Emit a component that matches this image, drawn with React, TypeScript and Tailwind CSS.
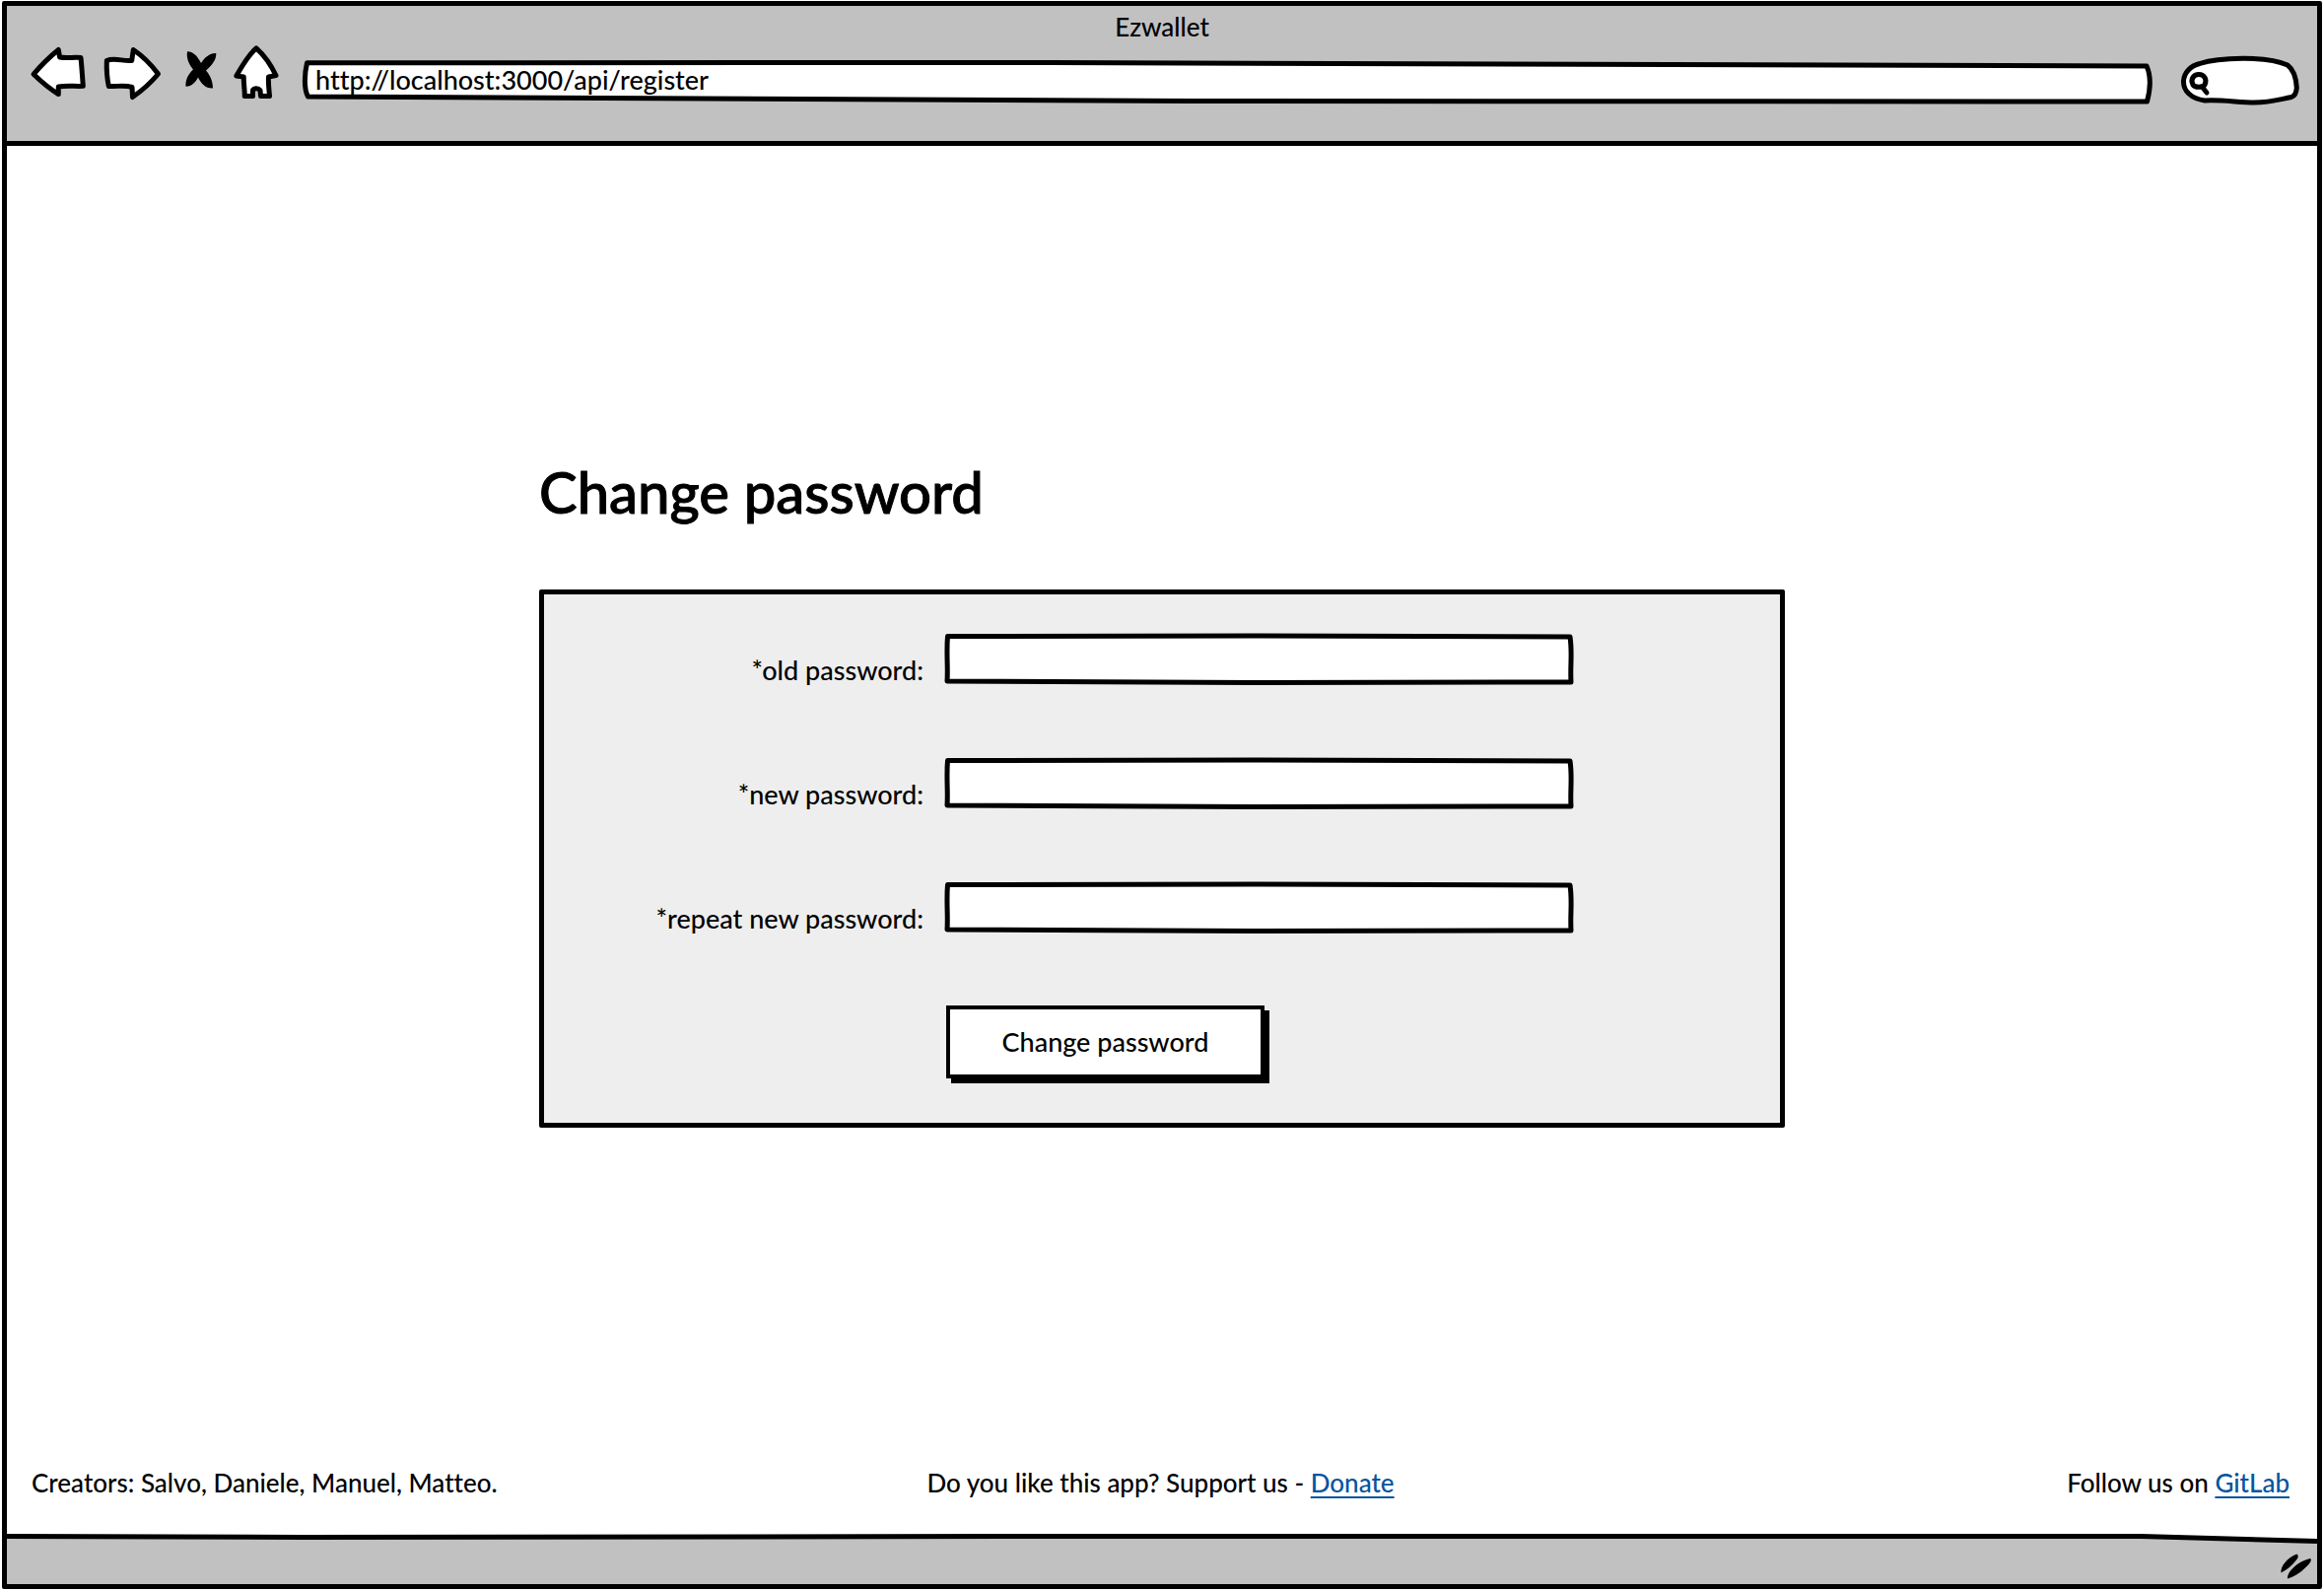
import { useState } from "react";

const stroke = {
  fill: "white",
  stroke: "black",
  strokeWidth: 5,
  strokeLinecap: "round" as const,
  strokeLinejoin: "round" as const,
};

function BackIcon() {
  return (
    <svg className="block h-16 w-[60px]" viewBox="0 0 60 64" aria-hidden="true">
      <path {...stroke} d="M4 31.3C12 22 20 14 29.3 6.5L30.6 14C38 15.5 45 13.5 52 14.5C53 24 53.5 33 54.3 43.3C46 43.8 38 42.5 29.3 44L29.3 51.5C20 46 12 39 4 31.3Z" />
    </svg>
  );
}

function ForwardIcon() {
  return (
    <svg className="block h-16 w-16" viewBox="0 0 64 64" aria-hidden="true">
      <path {...stroke} d="M6.3 17.5C14 14 23 18.5 31.7 17.5L33.3 6.5C43 13 51 21 58.5 31C51 40 42 48 32.5 54.5L32 44.3C24 42 16 44 8.3 43.5C6.5 35 6 26 6.3 17.5Z" />
    </svg>
  );
}

function StopIcon() {
  return (
    <svg className="block h-16 w-11" viewBox="0 0 44 64" aria-hidden="true">
      <path d="M12 8.3C17 8 22 12 26 20C30 14 35 9.5 41.3 10C41.5 17 37 22 31 27.5C35 32 38 38 38 45.5C31 46 26 41 23 34.5C20 40 16 44 10.5 43.7C10 37 13 31 18 26.5C13 21 11 14 12 8.3Z" />
    </svg>
  );
}

function HomeIcon() {
  return (
    <svg className="block h-16 w-[52px]" viewBox="0 0 52 64" aria-hidden="true">
      <path {...stroke} d="M26 4.8C33 11 41 22 46 32.5L38.5 34C38 41 39 47 39.5 53.5L30.5 53.5L30 47.5C28 45 24 45 22.5 47.5L22.5 53.5L14.2 53.5C14.5 47 13 41 13.3 34L5.8 33C12 22 19 11 26 4.8Z" />
    </svg>
  );
}

function AddressOutline() {
  return (
    <svg className="absolute inset-0 h-full w-full" viewBox="0 0 1879 48" preserveAspectRatio="none" aria-hidden="true">
      <path {...stroke} d="M5.5 3.8L760 3.5L1872 7C1877 18 1876 30 1872.5 43L900 42.5L6.5 38C2 30 3 14 5.5 3.8Z" />
    </svg>
  );
}

function SearchOutline() {
  return (
    <svg className="absolute inset-0 h-full w-full" viewBox="0 0 122 52" aria-hidden="true">
      <path {...stroke} d="M25 46C11 44 3 36 3.5 26C4 18 10 11 20 8.5C38 2.5 88 0 109 10C117 16 118 28 118.3 33C118 38 117 41 113 42.5C100 45 92 48 75 48C60 48 42 45 25 46Z" />
      <path {...stroke} d="M13 30C10 24 14 19.5 19 19.5C25 19.5 27.5 25 25 30C23 33 15 33 13 30ZM23 33L27 38" />
    </svg>
  );
}

function FieldOutline() {
  return (
    <svg className="absolute inset-0 h-full w-full" viewBox="0 0 639 53" preserveAspectRatio="none" aria-hidden="true">
      <path {...stroke} d="M3.5 3.5L320 3L635 4C637.5 20 635 34 636 50L320 50.5L3 49C4 35 2 20 3.5 3.5Z" />
    </svg>
  );
}

function StatusOutline() {
  return (
    <svg className="absolute inset-0 h-full w-full" viewBox="0 0 2344 51" preserveAspectRatio="none" aria-hidden="true">
      <path fill="white" d="M0 0H2344V7L2165 2L0 2Z" />
      <path fill="none" stroke="black" strokeWidth="5" d="M0 2.5L300 3.5L1100 2.5L2165 2.5L2344 7.5" />
    </svg>
  );
}

function ResizeGrip() {
  return (
    <svg className="relative h-8 w-9" viewBox="0 0 36 32" aria-hidden="true">
      <path d="M2.5 22.5C1.5 16 9 7 18.5 3.5C20.5 5 20 7 18 9.5C14 15 9 19 2.5 22.5Z" />
      <path d="M9 28.5C8 22 19 11 32 8C34 9.5 32 12 30 14.5C24 21 17 26 9 28.5Z" />
    </svg>
  );
}

function PasswordField({ id, label }: { id: string; label: string }) {
  const [value, setValue] = useState("");
  return (
    <>
      <label htmlFor={id} className="self-end text-right text-[27px] leading-[30px]">
        {label}
      </label>
      <div className="relative h-[53px]">
        <FieldOutline />
        <input
          id={id}
          type="password"
          value={value}
          onChange={(e) => setValue(e.target.value)}
          className="relative h-full w-full bg-transparent px-4 outline-none"
        />
      </div>
    </>
  );
}

export default function App() {
  const [url, setUrl] = useState("http://localhost:3000/api/register");
  return (
    <div className="flex min-h-screen flex-col bg-white px-[2px] pt-px pb-[2px] font-['Lato',sans-serif] text-[26px] leading-8 font-medium text-black [font-variant-ligatures:none]">
      <div className="flex flex-1 flex-col rounded-xs border-[5px] border-black">
        <header className="border-b-[5px] border-black bg-[#c1c1c1] pb-[35px]">
          <div className="pt-[5px] pb-px text-center">Ezwallet</div>
          <div className="flex items-end pr-[17px] pl-[23px]">
            <nav className="flex gap-3" aria-label="Browser">
              <button type="button" aria-label="Back"><BackIcon /></button>
              <button type="button" aria-label="Forward"><ForwardIcon /></button>
              <button type="button" aria-label="Stop"><StopIcon /></button>
              <button type="button" aria-label="Home"><HomeIcon /></button>
            </nav>
            <div className="relative ml-5 h-12 flex-1">
              <AddressOutline />
              <input
                type="text"
                aria-label="Address"
                value={url}
                onChange={(e) => setUrl(e.target.value)}
                className="relative block h-10 w-full bg-transparent px-[14px] text-[27px] outline-none"
              />
            </div>
            <div className="relative ml-[27px] h-[52px] w-[122px]">
              <SearchOutline />
              <input type="search" aria-label="Search" className="relative h-full w-full bg-transparent pr-3 pl-9 outline-none" />
            </div>
          </div>
        </header>

        <main className="mx-auto w-[1264px] max-w-full flex-1 pt-[315px]">
          <h1 className="text-[58px] leading-[72px] [-webkit-text-stroke-width:1px]">Change password</h1>
          <form
            className="mt-[63px] rounded-xs border-[5px] border-black bg-[#eeeeee] pt-[39px] pb-[45px]"
            onSubmit={(e) => e.preventDefault()}
          >
            <div className="grid grid-cols-[385fr_639fr_188fr] gap-x-[21px] gap-y-[73px] [&>div]:col-start-2 [&>label]:col-start-1">
              <PasswordField id="old" label="*old password:" />
              <PasswordField id="new" label="*new password:" />
              <PasswordField id="repeat" label="*repeat new password:" />
              <div>
                <button
                  type="submit"
                  className="ml-0.5 block h-[74px] w-[323px] border-4 border-black bg-white text-[27px] shadow-[5px_5px_0_0_black]"
                >
                  Change password
                </button>
              </div>
            </div>
          </form>
        </main>

        <footer className="grid grid-cols-3 pr-7 pb-9 pl-[25px]">
          <p>Creators: Salvo, Daniele, Manuel, Matteo.</p>
          <p className="text-center">
            Do you like this app? Support us -{" "}
            <a href="#donate" className="text-[#0853a0] underline decoration-2 underline-offset-4">Donate</a>
          </p>
          <p className="text-right">
            Follow us on{" "}
            <a href="#gitlab" className="text-[#0853a0] underline decoration-2 underline-offset-4">GitLab</a>
          </p>
        </footer>

        <div className="relative flex h-[51px] items-end justify-end bg-[#c1c1c1] pr-[3px] pb-0.5">
          <StatusOutline />
          <ResizeGrip />
        </div>
      </div>
    </div>
  );
}
